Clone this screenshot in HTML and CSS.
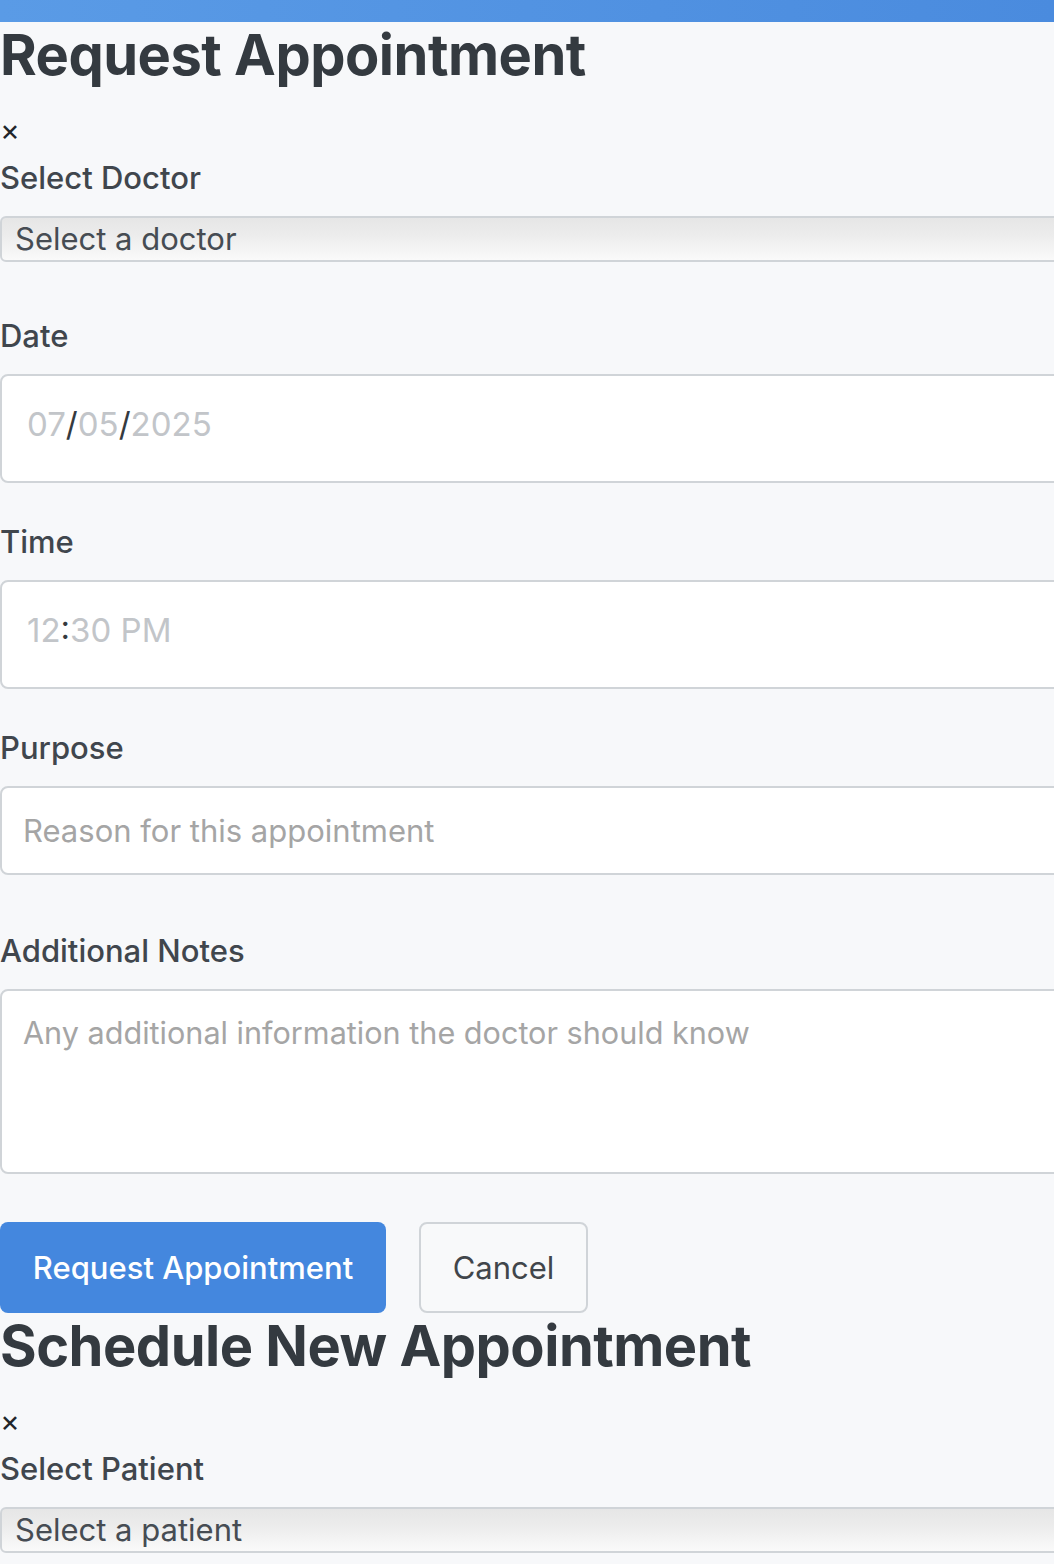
FILE: index.html
```html
<!DOCTYPE html>
<html lang="en">
<head>
<meta charset="utf-8">
<title>Appointments</title>
<link rel="stylesheet" href="styles.css">
</head>
<body>
<div class="topbar"></div>

<section class="modal">
  <h1 class="modal-title">Request Appointment</h1>
  <div class="close">×</div>
  <div class="group group-select">
    <label class="label">Select Doctor</label>
    <div class="select">Select a doctor</div>
  </div>
  <div class="group group-dt">
    <label class="label">Date</label>
    <div class="input input-dt"><span class="seg">07</span><span class="sep">/</span><span class="seg">05</span><span class="sep">/</span><span class="seg">2025</span></div>
  </div>
  <div class="group group-dt">
    <label class="label">Time</label>
    <div class="input input-dt"><span class="seg">12</span><span class="sep">:</span><span class="seg">30 PM</span></div>
  </div>
  <div class="group group-purpose">
    <label class="label">Purpose</label>
    <input class="input input-text" type="text" placeholder="Reason for this appointment">
  </div>
  <div class="group group-notes">
    <label class="label">Additional Notes</label>
    <textarea class="input textarea" placeholder="Any additional information the doctor should know"></textarea>
  </div>
  <div class="actions">
    <button class="btn btn-primary">Request Appointment</button>
    <button class="btn btn-secondary">Cancel</button>
  </div>
</section>

<section class="modal">
  <h1 class="modal-title">Schedule New Appointment</h1>
  <div class="close">×</div>
  <div class="group group-select">
    <label class="label">Select Patient</label>
    <div class="select">Select a patient</div>
  </div>
</section>
</body>
</html>
```

FILE: styles.css
```css
html, body {
  margin: 0;
  padding: 0;
  overflow: hidden;
}
body {
  background: #f7f8fa;
  font-family: Inter, Roboto, "Noto Sans", sans-serif;
  color: #343a40;
  width: 1054px;
}
.topbar {
  height: 22px;
  background: linear-gradient(90deg, #5a9be6, #4a8bde);
}
.modal {
  width: 1120px;
}
.modal-title {
  margin: 0;
  font-size: 56px;
  font-weight: 700;
  line-height: 66px;
  color: #343a40;
  letter-spacing: -0.5px;
}
.close {
  font-size: 30px;
  line-height: 30px;
  margin-top: 27px;
  color: #212529;
}
.label {
  display: block;
  font-size: 31px;
  font-weight: 500;
  line-height: 38px;
  color: #40464d;
  margin-bottom: 19px;
}
.group-select {
  margin-top: 14px;
  margin-bottom: 55px;
}
.group-dt {
  margin-bottom: 40px;
}
.group-purpose {
  margin-bottom: 57px;
}
.group-notes {
  margin-bottom: 48px;
}
.select {
  box-sizing: border-box;
  height: 46px;
  border: 2px solid #d0d4d8;
  border-radius: 6px;
  background: linear-gradient(180deg, #e6e6e6 0%, #ececec 40%, #fafafa 100%);
  font-size: 31px;
  line-height: 42px;
  padding-left: 13px;
  color: #464c53;
}
.input {
  box-sizing: border-box;
  display: block;
  width: 100%;
  border: 2px solid #d0d4d8;
  border-radius: 8px;
  background: #fff;
  font-family: inherit;
  font-size: 31px;
  color: #343a40;
  margin: 0;
  outline: none;
}
.input-dt {
  height: 109px;
  padding: 0 0 0 25px;
  font-size: 33px;
  line-height: 97px;
}
.seg {
  color: #c2c5c9;
}
.sep {
  color: #343a40;
}
.input-text {
  height: 89px;
  padding: 0 21px;
}
.textarea {
  height: 185px;
  padding: 22px 21px;
  resize: none;
  font-size: 30.6px;
  line-height: 40px;
}
.input::placeholder {
  color: #a5a5a5;
  opacity: 1;
}
.actions {
  display: flex;
  gap: 33px;
}
.btn {
  box-sizing: border-box;
  height: 91px;
  font-family: inherit;
  font-size: 31px;
  border-radius: 8px;
  cursor: pointer;
}
.btn-primary {
  width: 386px;
  background: #4487de;
  border: none;
  color: #fff;
  font-weight: 500;
}
.btn-secondary {
  width: 169px;
  background: #f8f9fa;
  border: 2px solid #d0d4d8;
  color: #41464b;
}
```
